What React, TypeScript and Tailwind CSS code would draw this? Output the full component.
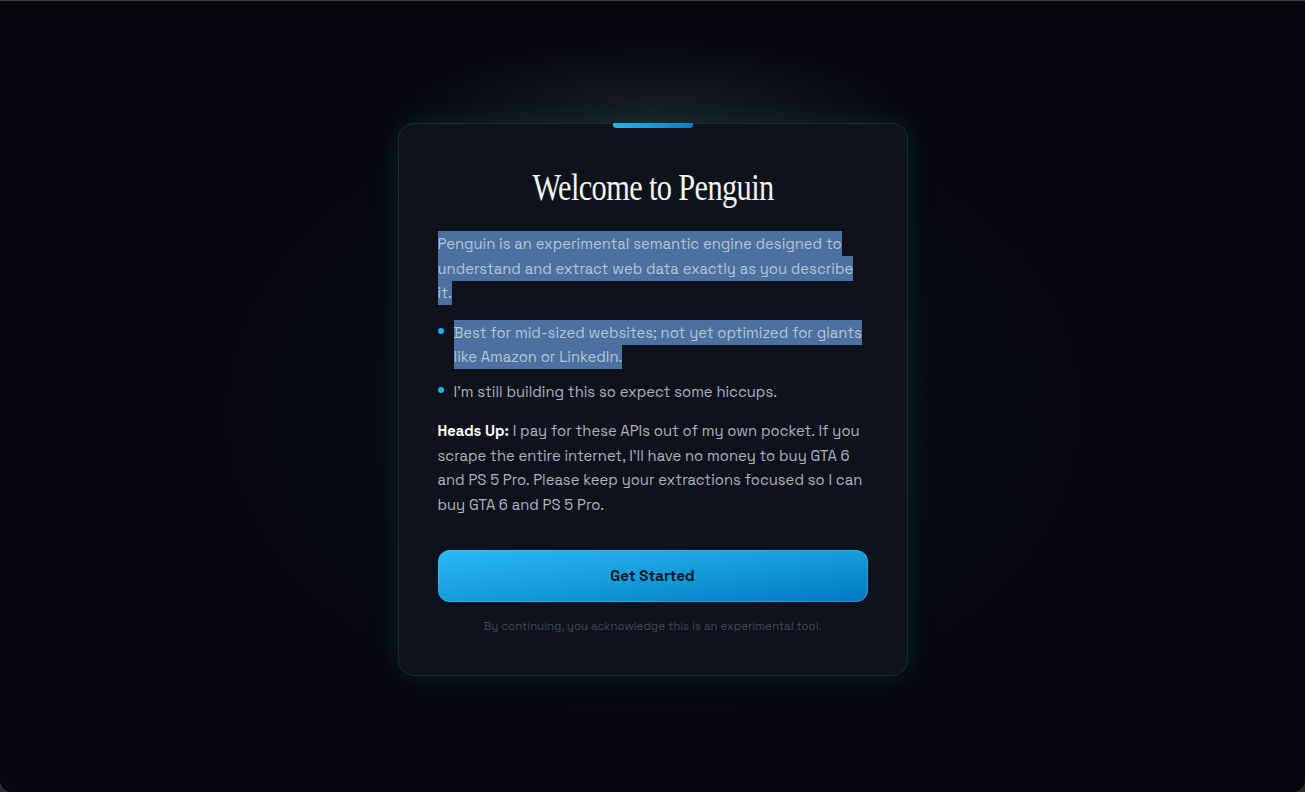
const bullets = [
  { text: "Best for mid-sized websites; not yet optimized for giants like Amazon or LinkedIn.", selected: true },
  { text: "I’m still building this so expect some hiccups.", selected: false },
];

const sel = "bg-[#4a71a0] text-[#b9c4d4] py-[3px] [box-decoration-break:clone]";

export default function App() {
  return (
    <div className="h-screen w-full bg-[#2a2a2c] overflow-hidden">
      <div
        className="relative h-full w-full border-t border-[#3d3d40] rounded-b-[12px] overflow-hidden bg-[#06080c] flex items-start justify-center pt-[122px] font-['Space_Grotesk','Roboto',sans-serif]"
      >
        {/* soft halo behind the card */}
        <div className="pointer-events-none absolute left-1/2 top-[40px] h-[160px] w-[520px] -translate-x-1/2 rounded-full bg-[radial-gradient(ellipse_at_center,rgba(40,52,52,0.55),rgba(6,8,12,0)_70%)]" />
        <div className="pointer-events-none absolute left-1/2 top-[90px] h-[640px] w-[900px] -translate-x-1/2 rounded-[60px] bg-[radial-gradient(ellipse_at_center,rgba(18,24,32,0.45),rgba(6,8,12,0)_70%)]" />

        <div className="relative w-[510px] rounded-[16px] border border-[#1b2a33] bg-[#0e121b] px-[39px] pt-[42px] pb-[40px] shadow-[0_0_28px_rgba(20,120,170,0.2)]">
          <div className="absolute left-1/2 -top-px h-[5px] w-20 -translate-x-1/2 rounded-b-[3px] bg-gradient-to-r from-[#27b3ee] to-[#0581c4]" />

          <h1 className="text-center font-['Liberation_Serif',serif] text-[37px] leading-[44px] tracking-[-0.02em] text-[#f4f5f7] scale-x-[0.82]">
            Welcome to Penguin
          </h1>

          <div className="mt-[22px] text-[14.8px] leading-[24.5px] text-[#aab4c3]">
            <p>
              <span className={sel}>
                Penguin is an experimental semantic engine designed to understand and extract web data exactly as you describe it.
              </span>
            </p>

            <ul className="mt-[15px] flex flex-col gap-[10px]">
              {bullets.map((b) => (
                <li key={b.text} className="flex gap-[10px]">
                  <span className="mt-[7px] h-[6px] w-[6px] shrink-0 rounded-full bg-[#1eaef0]" />
                  <span>{b.selected ? <span className={sel}>{b.text}</span> : b.text}</span>
                </li>
              ))}
            </ul>

            <p className="mt-[15px]">
              <span className="font-bold text-white">Heads Up:</span> I pay for these APIs out of my own pocket. If you
              scrape the entire internet, I’ll have no money to buy GTA 6 and PS 5 Pro. Please keep your extractions
              focused so I can buy GTA 6 and PS 5 Pro.
            </p>
          </div>

          <button className="mt-[33px] flex h-[52px] w-full items-center justify-center rounded-[12px] bg-gradient-to-br from-[#2cb8f2] via-[#149dd9] to-[#0379bd] text-[15px] font-semibold text-[#0b1726] shadow-[inset_0_0_0_1px_rgba(90,200,250,0.35)]">
            Get Started
          </button>

          <p className="mt-[16px] text-center text-[11.5px] text-[#3f4756]">
            By continuing, you acknowledge this is an experimental tool.
          </p>
        </div>
      </div>
    </div>
  );
}
